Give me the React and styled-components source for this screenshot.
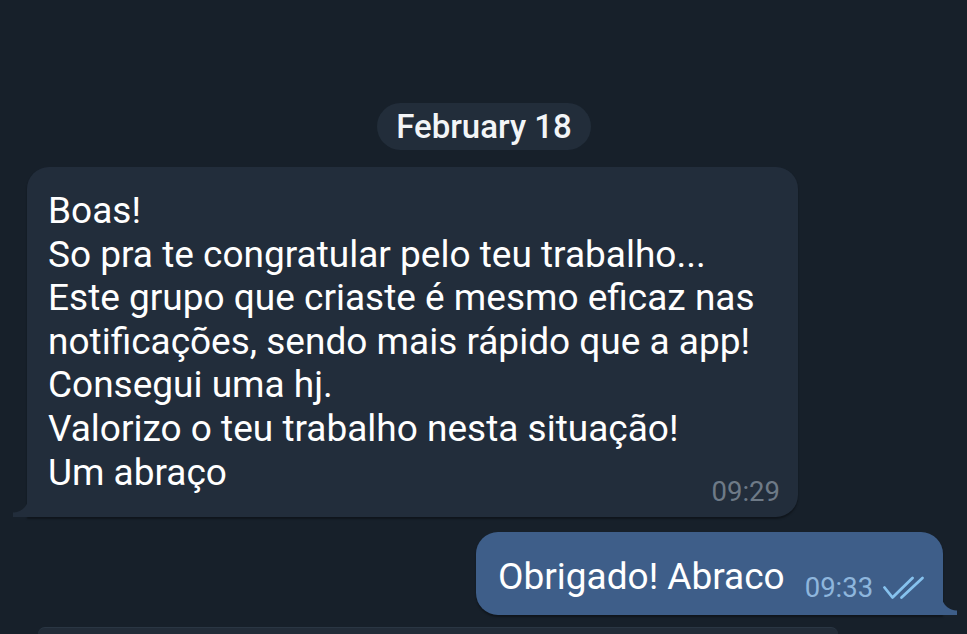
import React from "react";
import styled, { createGlobalStyle } from "styled-components";

const Global = createGlobalStyle`
  html, body { margin: 0; padding: 0; background: #17202a; }
  body { font-family: Roboto, "Noto Sans", Arial, sans-serif; overflow: hidden; }
  #root { width: 967px; height: 634px; overflow: hidden; }
`;

const Chat = styled.div`
  display: flex;
  flex-direction: column;
  width: 967px;
  height: 634px;
  padding-top: 103px;
  box-sizing: border-box;
  background: #17202a;
  overflow: hidden;
`;

const DateRow = styled.div`
  display: flex;
  justify-content: center;
  margin-bottom: 17px;
`;

const DatePill = styled.div`
  background: #222d3a;
  color: #f3f5f7;
  font-weight: 500;
  font-size: 33px;
  line-height: 47px;
  padding: 0 19px;
  border-radius: 24px;
  margin-left: 1px;
`;

const Row = styled.div`
  display: flex;
  justify-content: ${(p) => (p.$out ? "flex-end" : "flex-start")};
  padding: ${(p) => (p.$out ? "0 24px 0 0" : "0 0 0 27px")};
  margin-bottom: ${(p) => p.$gap || 0}px;
`;

const Bubble = styled.div`
  position: relative;
  box-sizing: border-box;
  width: ${(p) => p.$w}px;
  background: ${(p) => (p.$out ? "#3e5e89" : "#222d3b")};
  color: #ffffff;
  border-radius: ${(p) => (p.$out ? "22px 22px 0 22px" : "22px 22px 22px 0")};
  box-shadow: 0 2px 2px rgba(0, 0, 0, 0.35);
  font-size: 37px;

  &::before {
    content: "";
    position: absolute;
    bottom: 0;
    width: 16px;
    height: 20px;
    ${(p) =>
      p.$out
        ? `right: -14px; background: radial-gradient(circle at 100% 0, transparent 15px, #3e5e89 16px);`
        : `left: -14px; background: radial-gradient(circle at 0 0, transparent 15px, #222d3b 16px);`}
  }
`;

const InBody = styled.div`
  display: flex;
  flex-direction: column;
  padding: 22px 18px 23px 21px;
  line-height: 43.6px;
`;

const Line = styled.div`
  display: flex;
  justify-content: space-between;
  align-items: flex-end;
`;

const Time = styled.span`
  font-size: 27.5px;
  line-height: 30px;
  color: #6e7a87;
  transform: translateY(13px);
`;

const OutBody = styled.div`
  display: flex;
  align-items: flex-start;
  padding: 24px 16px 0 22px;
  height: 83px;
  box-sizing: border-box;
  line-height: 42.7px;
`;

const OutMeta = styled.span`
  display: flex;
  align-items: center;
  gap: 10px;
  margin-left: 20px;
  margin-top: 17px;
  font-size: 27.5px;
  line-height: 30px;
  color: #8eb6dd;
`;

const NextBubble = styled.div`
  margin-left: 38px;
  width: 800px;
  height: 60px;
  background: #222c38;
  border-radius: 22px 22px 0 0;
  border-top: 1px solid #2a3643;
`;

const Checks = () => (
  <svg width="42" height="24" viewBox="0 0 42 24" fill="none" stroke="#86c2ee" strokeWidth="2.8" strokeLinecap="round" strokeLinejoin="round">
    <path d="M1.5 11.5 L9.5 21.5 L29.5 2" />
    <path d="M18.5 21.5 L39.5 2" />
  </svg>
);

const incoming = [
  "Boas!",
  "So pra te congratular pelo teu trabalho...",
  "Este grupo que criaste é mesmo eficaz nas",
  "notificações, sendo mais rápido que a app!",
  "Consegui uma hj.",
  "Valorizo o teu trabalho nesta situação!",
];

export default function App() {
  return (
    <>
      <Global />
      <Chat>
        <DateRow>
          <DatePill>February 18</DatePill>
        </DateRow>
        <Row $gap={15}>
          <Bubble $w={771}>
            <InBody>
              {incoming.map((t) => (
                <Line key={t}>{t}</Line>
              ))}
              <Line>
                <span>Um abraço</span>
                <Time>09:29</Time>
              </Line>
            </InBody>
          </Bubble>
        </Row>
        <Row $out $gap={12}>
          <Bubble $out $w={467}>
            <OutBody>
              Obrigado! Abraco
              <OutMeta>
                09:33
                <Checks />
              </OutMeta>
            </OutBody>
          </Bubble>
        </Row>
        <NextBubble />
      </Chat>
    </>
  );
}
